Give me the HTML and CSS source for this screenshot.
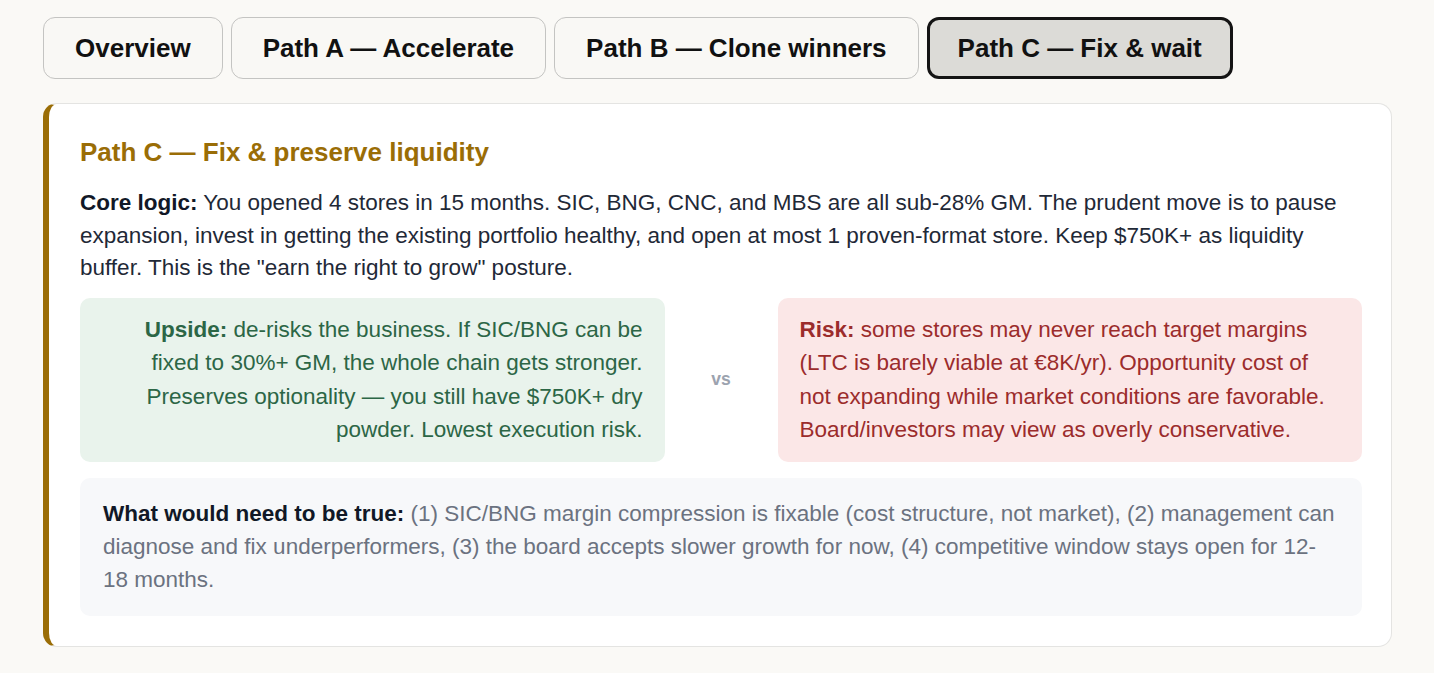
FILE: index.html
```html
<!DOCTYPE html>
<html lang="en">
<head>
<meta charset="utf-8">
<title>Path C — Fix &amp; wait</title>
<link rel="stylesheet" href="styles.css">
</head>
<body>
<div class="page">
  <nav class="tabs">
    <button class="tab">Overview</button>
    <button class="tab">Path A — Accelerate</button>
    <button class="tab">Path B — Clone winners</button>
    <button class="tab active">Path C — Fix &amp; wait</button>
  </nav>
  <section class="card">
    <h2 class="card-title">Path C — Fix &amp; preserve liquidity</h2>
    <p class="core"><strong>Core logic:</strong> You opened 4 stores in 15 months. SIC, BNG, CNC, and MBS are all sub-28% GM. The prudent move is to pause expansion, invest in getting the existing portfolio healthy, and open at most 1 proven-format store. Keep $750K+ as liquidity buffer. This is the "earn the right to grow" posture.</p>
    <div class="compare">
      <div class="box upside"><strong>Upside:</strong> de-risks the business. If SIC/BNG can be fixed to 30%+ GM, the whole chain gets stronger. Preserves optionality — you still have $750K+ dry powder. Lowest execution risk.</div>
      <div class="vs">vs</div>
      <div class="box risk"><strong>Risk:</strong> some stores may never reach target margins (LTC is barely viable at €8K/yr). Opportunity cost of not expanding while market conditions are favorable. Board/investors may view as overly conservative.</div>
    </div>
    <div class="truth"><strong>What would need to be true:</strong> (1) SIC/BNG margin compression is fixable (cost structure, not market), (2) management can diagnose and fix underperformers, (3) the board accepts slower growth for now, (4) competitive window stays open for 12-18 months.</div>
  </section>
</div>
</body>
</html>
```
FILE: styles.css
```css
html, body {
  margin: 0;
  padding: 0;
  background: #faf9f6;
}
body {
  font-family: "Liberation Sans", Arial, sans-serif;
  color: #1f2937;
}
.page {
  padding: 17px 42px 20px 43px;
}
.tabs {
  display: flex;
  gap: 8px;
  margin-bottom: 24px;
}
.tab {
  font-family: "Liberation Sans", Arial, sans-serif;
  font-weight: 700;
  font-size: 26px;
  line-height: 30px;
  color: #111111;
  background: #f9f8f5;
  border: 1px solid #c4c4c2;
  border-radius: 12px;
  padding: 15px 31px 15px 31px;
  cursor: pointer;
}
.tab.active {
  background: #dcdbd7;
  border: 3px solid #141414;
  padding: 13px 28px;
}
.card {
  background: #ffffff;
  border: 1px solid #e4e4e2;
  border-left: 6px solid #9a6d06;
  border-radius: 14px;
  padding: 33px 29px 30px 31px;
}
.card-title {
  margin: 0 0 20px;
  font-size: 26px;
  line-height: 30px;
  font-weight: 700;
  color: #9a6d06;
}
.core {
  margin: 0 0 13px;
  font-size: 22.5px;
  line-height: 32.5px;
  color: #1f2937;
}
.core strong {
  color: #111827;
}
.compare {
  display: grid;
  grid-template-columns: 1fr 81px 1fr;
  gap: 16px;
  align-items: stretch;
  margin-bottom: 16px;
}
.box {
  border-radius: 10px;
  padding: 15px 22px;
  font-size: 22.5px;
  line-height: 33.5px;
}
.upside {
  background: #e9f3ec;
  color: #2c6646;
  text-align: right;
}
.risk {
  background: #fbe7e7;
  color: #9b2c2c;
}
.vs {
  display: flex;
  align-items: center;
  justify-content: center;
  font-size: 17.5px;
  font-weight: 700;
  color: #9ca3af;
}
.truth {
  background: #f7f8fa;
  border-radius: 10px;
  padding: 19px 25px 20px 23px;
  font-size: 22.5px;
  line-height: 33px;
  color: #6b7280;
}
.truth strong {
  color: #111827;
}
```
